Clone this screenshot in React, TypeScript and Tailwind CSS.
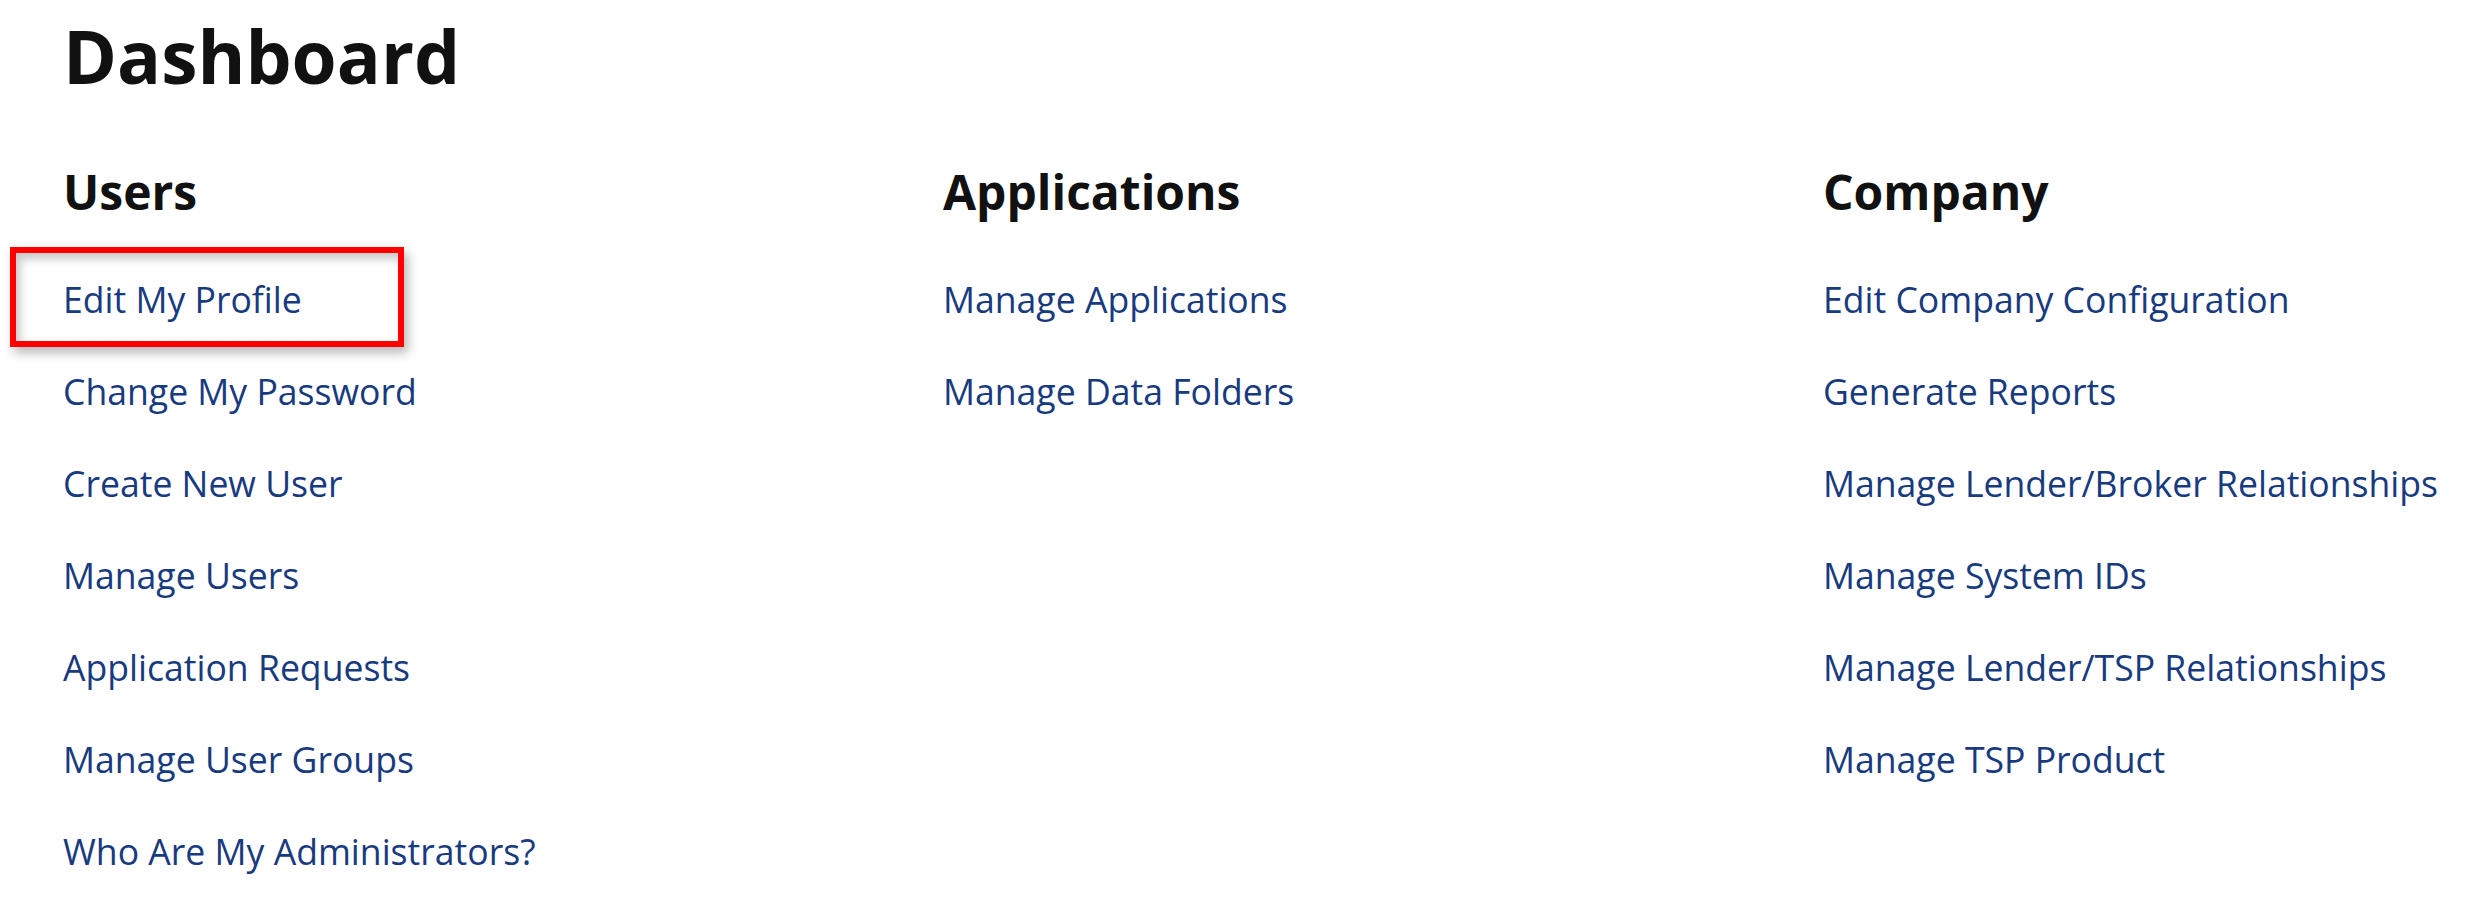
const columns = [
  {
    title: "Users",
    links: [
      "Edit My Profile",
      "Change My Password",
      "Create New User",
      "Manage Users",
      "Application Requests",
      "Manage User Groups",
      "Who Are My Administrators?",
    ],
  },
  {
    title: "Applications",
    links: ["Manage Applications", "Manage Data Folders"],
  },
  {
    title: "Company",
    links: [
      "Edit Company Configuration",
      "Generate Reports",
      "Manage Lender/Broker Relationships",
      "Manage System IDs",
      "Manage Lender/TSP Relationships",
      "Manage TSP Product",
    ],
  },
];

function DashLink({ label, highlighted }: { label: string; highlighted?: boolean }) {
  return (
    <li className="relative h-[92px]">
      {/* callout frame around the highlighted entry */}
      {highlighted && (
        <div className="absolute left-[-53px] top-[-6px] w-[394px] h-[100px] border-[6px] border-[#ff0000] shadow-[4px_6px_10px_rgba(0,0,0,0.28),inset_4px_6px_10px_rgba(0,0,0,0.22)] pointer-events-none" />
      )}
      <a href="#" className="block text-[35.6px] leading-[92px] text-[#183a7e] whitespace-nowrap">
        {label}
      </a>
    </li>
  );
}

export default function App() {
  return (
    <div className="min-h-screen bg-white font-['Open_Sans',sans-serif] pl-[63px] pt-[19px]">
      <h1 className="text-[73px] leading-[73px] font-bold text-[#111111]">Dashboard</h1>

      <div className="grid grid-cols-[880px_880px_1fr] mt-[76px]">
        {columns.map((col) => (
          <section key={col.title}>
            <h2 className="text-[48px] leading-[48px] font-bold text-[#111111]">{col.title}</h2>
            <ul className="mt-[37px]">
              {col.links.map((link, i) => (
                <DashLink key={link} label={link} highlighted={col.title === "Users" && i === 0} />
              ))}
            </ul>
          </section>
        ))}
      </div>
    </div>
  );
}
